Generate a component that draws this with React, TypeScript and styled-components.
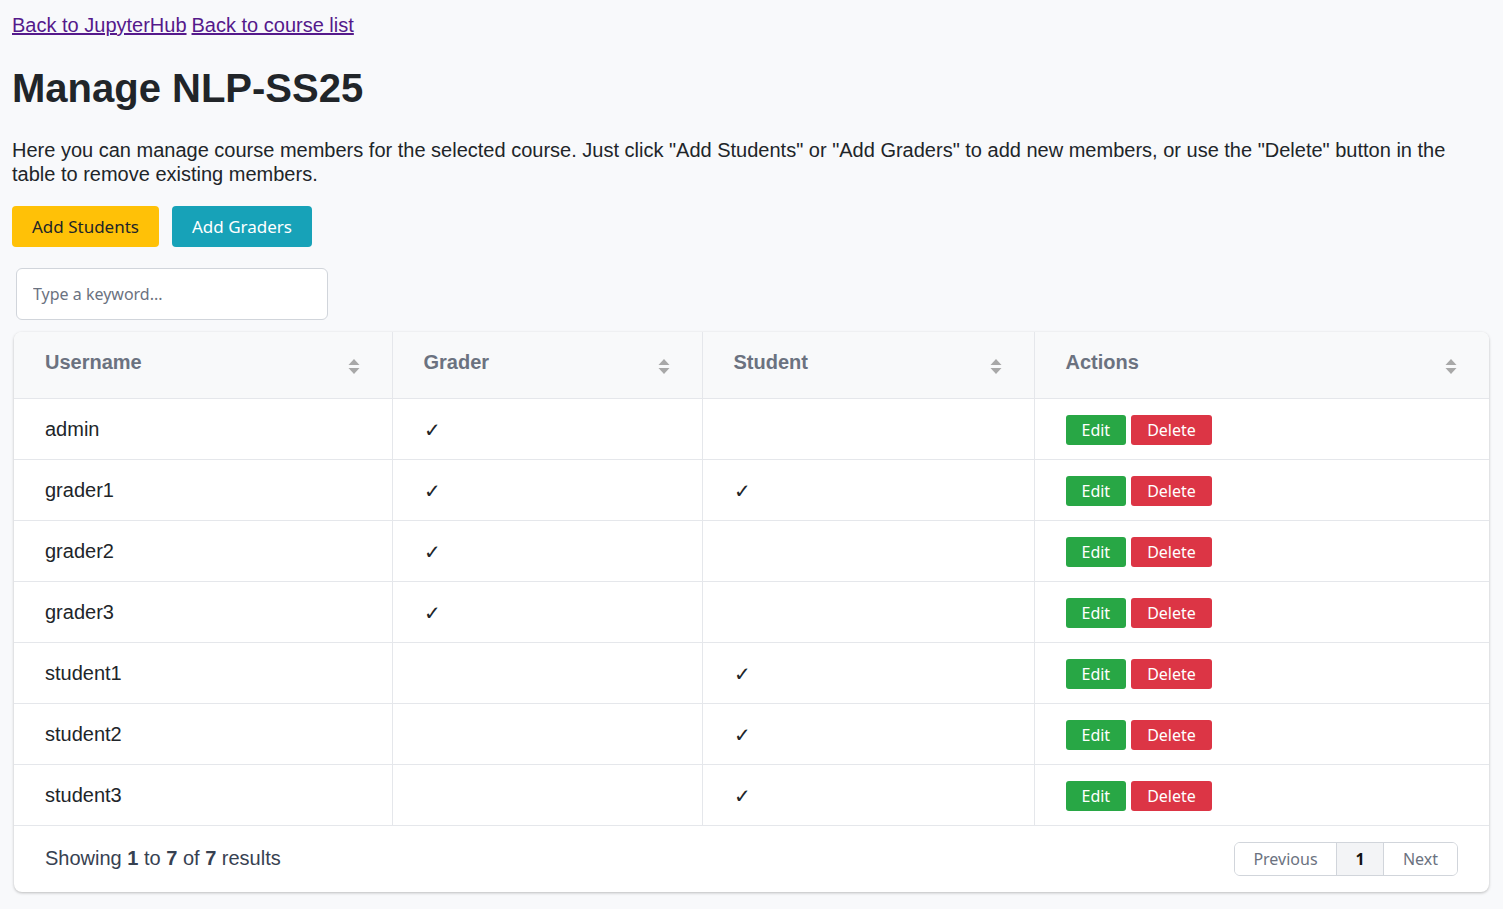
import styled, { createGlobalStyle } from "styled-components";

const members = [
  { username: "admin", grader: true, student: false },
  { username: "grader1", grader: true, student: true },
  { username: "grader2", grader: true, student: false },
  { username: "grader3", grader: true, student: false },
  { username: "student1", grader: false, student: true },
  { username: "student2", grader: false, student: true },
  { username: "student3", grader: false, student: true },
];

const columns = [
  { label: "Username", width: 378 },
  { label: "Grader", width: 310 },
  { label: "Student", width: 332 },
  { label: "Actions", width: 455 },
];

const GlobalStyle = createGlobalStyle`
  body {
    margin: 0;
    background: #f8f9fb;
    font-family: "Liberation Sans", Arial, sans-serif;
    color: #212529;
  }
`;

const Page = styled.div`
  padding: 14px 14px 20px 12px;
`;

const Links = styled.div`
  display: flex;
  gap: 5px;
  font-size: 20px;
  line-height: 23px;

  a {
    color: #551a8b;
    text-decoration: underline;
  }
`;

const Title = styled.h1`
  margin: 27px 0 0;
  font-size: 40px;
  line-height: 48px;
  font-weight: 700;
  color: #212529;
`;

const Intro = styled.p`
  margin: 26px 0 0;
  font-size: 20px;
  line-height: 24px;
  color: #212529;
`;

const ButtonRow = styled.div`
  display: flex;
  gap: 13px;
  margin-top: 20px;
`;

const MainButton = styled.button<{ $variant: "warning" | "info" }>`
  height: 41px;
  padding: 0 20px;
  border: none;
  border-radius: 4px;
  font-family: "Noto Sans", "Open Sans", sans-serif;
  font-size: 17px;
  background: ${(p) => (p.$variant === "warning" ? "#ffc107" : "#17a2b8")};
  color: ${(p) => (p.$variant === "warning" ? "#212529" : "#ffffff")};
`;

const Search = styled.input`
  display: block;
  margin: 21px 0 0 4px;
  width: 312px;
  height: 52px;
  box-sizing: border-box;
  padding: 0 16px;
  border: 1px solid #d1d5db;
  border-radius: 6px;
  background: #fff;
  font-family: "Noto Sans", "Open Sans", sans-serif;
  font-size: 16px;
  color: #212529;

  &::placeholder {
    color: #6b7280;
  }
`;

const Card = styled.div`
  margin: 12px 0 0 2px;
  background: #fff;
  border-radius: 8px;
  box-shadow: 0 1px 3px rgba(0, 0, 0, 0.25);
  overflow: hidden;
`;

const Table = styled.table`
  width: 100%;
  border-collapse: collapse;
  table-layout: fixed;
`;

const HeadCell = styled.th`
  height: 66px;
  box-sizing: border-box;
  padding: 0 30px 0 31px;
  background: #f8f9fa;
  text-align: left;
  font-size: 20px;
  font-weight: 700;
  color: #6b7280;
  border-bottom: 1px solid #e5e7eb;
  border-right: 1px solid #e5e7eb;

  &:last-child {
    border-right: none;
  }
`;

const HeadInner = styled.div`
  display: flex;
  align-items: center;
  justify-content: space-between;
  padding-bottom: 4px;
`;

const SortIcon = styled.svg`
  width: 12px;
  height: 17px;
  margin-top: 8px;
  margin-right: 2px;
`;

const Cell = styled.td`
  height: 61px;
  box-sizing: border-box;
  padding: 2px 30px 0 31px;
  font-size: 20px;
  color: #212529;
  border-bottom: 1px solid #e5e7eb;
  border-right: 1px solid #e5e7eb;

  &:last-child {
    border-right: none;
  }
`;

const Actions = styled.div`
  display: flex;
  gap: 5px;
`;

const SmallButton = styled.button<{ $danger?: boolean }>`
  height: 30px;
  padding: 0 16px;
  border: none;
  border-radius: 3px;
  font-family: "Noto Sans", "Open Sans", sans-serif;
  font-size: 16px;
  color: #fff;
  background: ${(p) => (p.$danger ? "#dc3545" : "#28a745")};
`;

const Footer = styled.div`
  display: flex;
  align-items: center;
  justify-content: space-between;
  height: 66px;
  padding: 0 31px 0 31px;
  font-size: 20px;
  color: #374151;
`;

const Pager = styled.div`
  display: flex;
  height: 34px;
  box-sizing: border-box;
  border: 1px solid #d1d5db;
  border-radius: 6px;
  overflow: hidden;
  font-family: "Noto Sans", "Open Sans", sans-serif;
  font-size: 16px;
`;

const PageItem = styled.div<{ $active?: boolean; $w: number }>`
  width: ${(p) => p.$w}px;
  display: flex;
  align-items: center;
  justify-content: center;
  color: ${(p) => (p.$active ? "#111" : "#6b7280")};
  font-weight: ${(p) => (p.$active ? 700 : 400)};
  background: ${(p) => (p.$active ? "#f3f4f6" : "#fff")};
  border-right: 1px solid #d1d5db;

  &:last-child {
    border-right: none;
  }
`;

const Sort = () => (
  <SortIcon viewBox="0 0 12 17">
    <path d="M0.5 7 L6 1 L11.5 7 Z" fill="#a8a8a8" />
    <path d="M0.5 10 L6 16 L11.5 10 Z" fill="#a8a8a8" />
  </SortIcon>
);

export default function App() {
  return (
    <Page>
      <GlobalStyle />
      <Links>
        <a href="#">Back to JupyterHub</a>
        <a href="#">Back to course list</a>
      </Links>
      <Title>Manage NLP-SS25</Title>
      <Intro>
        Here you can manage course members for the selected course. Just click "Add Students" or
        "Add Graders" to add new members, or use the "Delete" button in the table to remove
        existing members.
      </Intro>
      <ButtonRow>
        <MainButton $variant="warning">Add Students</MainButton>
        <MainButton $variant="info">Add Graders</MainButton>
      </ButtonRow>
      <Search placeholder="Type a keyword..." />
      <Card>
        <Table>
          <colgroup>
            {columns.map((c) => (
              <col key={c.label} style={{ width: c.width }} />
            ))}
          </colgroup>
          <thead>
            <tr>
              {columns.map((c) => (
                <HeadCell key={c.label}>
                  <HeadInner>
                    <span>{c.label}</span>
                    <Sort />
                  </HeadInner>
                </HeadCell>
              ))}
            </tr>
          </thead>
          <tbody>
            {members.map((m) => (
              <tr key={m.username}>
                <Cell>{m.username}</Cell>
                <Cell>{m.grader ? "✓" : ""}</Cell>
                <Cell>{m.student ? "✓" : ""}</Cell>
                <Cell>
                  <Actions>
                    <SmallButton>Edit</SmallButton>
                    <SmallButton $danger>Delete</SmallButton>
                  </Actions>
                </Cell>
              </tr>
            ))}
          </tbody>
        </Table>
        <Footer>
          <span>
            Showing <b>1</b> to <b>7</b> of <b>7</b> results
          </span>
          <Pager>
            <PageItem $w={101}>Previous</PageItem>
            <PageItem $w={46} $active>
              1
            </PageItem>
            <PageItem $w={73}>Next</PageItem>
          </Pager>
        </Footer>
      </Card>
    </Page>
  );
}
